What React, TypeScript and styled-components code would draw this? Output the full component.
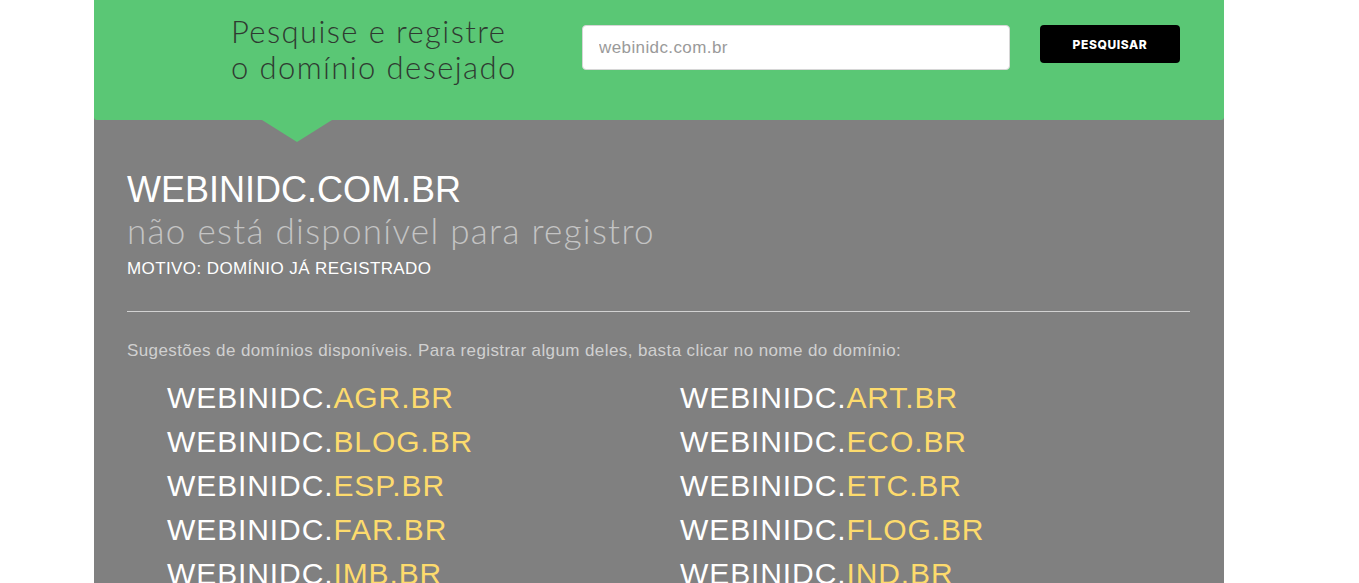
import React, { useState } from 'react';
import styled, { createGlobalStyle } from 'styled-components';

const GlobalStyle = createGlobalStyle`
  body {
    margin: 0;
    background: #ffffff;
    font-family: 'Liberation Sans', Arial, sans-serif;
  }
`;

const Page = styled.div`
  width: 1130px;
  margin-left: 94px;
  min-height: 583px;
  background-color: #808080;
`;

// barra verde de pesquisa
const SearchBar = styled.header`
  position: relative;
  display: flex;
  align-items: flex-start;
  height: 120px;
  padding-left: 137px;
  box-sizing: border-box;
  background-color: #5ac775;
  border-radius: 0 0 3px 3px;

  &::after {
    content: '';
    position: absolute;
    left: 168px;
    bottom: -22px;
    border-left: 35px solid transparent;
    border-right: 35px solid transparent;
    border-top: 22px solid #5ac775;
  }
`;

const Heading = styled.h2`
  width: 351px;
  margin: 13px 0 0;
  font-family: Lato, 'Open Sans', sans-serif;
  font-weight: 300;
  font-size: 31px;
  line-height: 36px;
  color: #2f3a31;
  letter-spacing: 1.4px;
  white-space: nowrap;
`;

const SearchInput = styled.input`
  width: 428px;
  height: 45px;
  margin-top: 25px;
  padding: 0 16px;
  box-sizing: border-box;
  border: 1px solid #d6d6d6;
  border-radius: 4px;
  font-family: 'Liberation Sans', Arial, sans-serif;
  font-size: 17px;
  letter-spacing: 0.4px;
  color: #555;
  outline: none;

  &::placeholder {
    color: #9a9a9a;
  }
`;

const SearchButton = styled.button`
  width: 140px;
  height: 38px;
  margin: 25px 0 0 30px;
  border: none;
  border-radius: 4px;
  background-color: #000;
  color: #fff;
  font-family: Inter, 'Open Sans', sans-serif;
  font-weight: 800;
  font-size: 12px;
  letter-spacing: 0.6px;
  cursor: pointer;
`;

const Result = styled.section`
  padding: 50px 34px 0 33px;
`;

const DomainTitle = styled.h1`
  margin: 0;
  font-weight: 400;
  font-size: 36px;
  line-height: 40px;
  color: #ffffff;
`;

const Status = styled.p`
  margin: 0;
  font-family: Lato, 'Open Sans', sans-serif;
  font-weight: 300;
  font-size: 35px;
  line-height: 40px;
  color: #c4c4c4;
  letter-spacing: 1.3px;
`;

const Reason = styled.p`
  margin: 9px 0 0;
  font-size: 17px;
  line-height: 20px;
  letter-spacing: 0.4px;
  color: #ffffff;
`;

const Divider = styled.hr`
  margin: 32px 0 0;
  border: none;
  border-top: 1px solid #d2d2d2;
`;

const Hint = styled.p`
  margin: 29px 0 0;
  font-size: 17px;
  line-height: 20px;
  letter-spacing: 0.4px;
  color: #d0d0d0;
`;

const SuggestionGrid = styled.ul`
  display: grid;
  grid-template-columns: 513px 513px;
  grid-auto-rows: 44px;
  margin: 15px 0 0;
  padding: 0 0 0 40px;
  list-style: none;
`;

const Suggestion = styled.li`
  font-size: 30px;
  line-height: 44px;
  letter-spacing: 0.9px;
  color: #ffffff;
  cursor: pointer;
`;

const Tld = styled.span`
  color: #fddb6d;
`;

const suggestions = [
  'AGR.BR',
  'ART.BR',
  'BLOG.BR',
  'ECO.BR',
  'ESP.BR',
  'ETC.BR',
  'FAR.BR',
  'FLOG.BR',
  'IMB.BR',
  'IND.BR',
];

const App: React.FC = () => {
  const [query, setQuery] = useState('');

  return (
    <React.Fragment>
      <GlobalStyle />
      <Page>
        <SearchBar>
          <Heading>
            Pesquise e registre
            <br />o domínio desejado
          </Heading>
          <SearchInput
            value={query}
            onChange={(e) => setQuery(e.target.value)}
            placeholder="webinidc.com.br"
          />
          <SearchButton>PESQUISAR</SearchButton>
        </SearchBar>
        <Result>
          <DomainTitle>WEBINIDC.COM.BR</DomainTitle>
          <Status>não está disponível para registro</Status>
          <Reason>MOTIVO: DOMÍNIO JÁ REGISTRADO</Reason>
          <Divider />
          <Hint>
            Sugestões de domínios disponíveis. Para registrar algum deles, basta
            clicar no nome do domínio:
          </Hint>
          <SuggestionGrid>
            {suggestions.map((tld) => (
              <Suggestion key={tld}>
                WEBINIDC.<Tld>{tld}</Tld>
              </Suggestion>
            ))}
          </SuggestionGrid>
        </Result>
      </Page>
    </React.Fragment>
  );
};

export default App;
